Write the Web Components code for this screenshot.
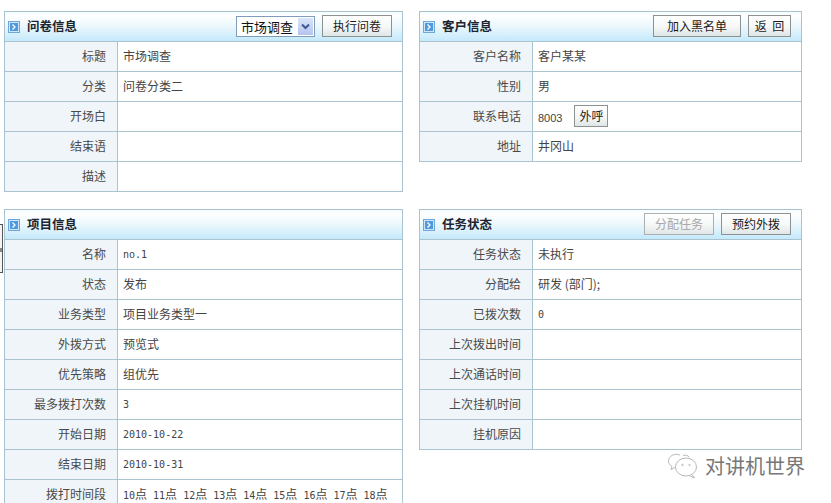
<!DOCTYPE html>
<html lang="zh">
<head>
<meta charset="utf-8">
<title>任务详情</title>
<style>
  html, body { margin: 0; padding: 0; height: 503px; overflow: hidden; background: #fff; }
  body { font: 12px "Noto Sans CJK SC", sans-serif; color: #444; }
  .mono { font: 10px "DejaVu Sans Mono", monospace; position: relative; top: 1px; }
  .slots .mono { top: 0; }
  .arial { font: 11px "Liberation Sans", sans-serif; padding-top: 5px; }
  .slots { display: flex; gap: 6px; }
</style>
</head>
<body>
<task-page>
  <info-panel title="问卷信息">
    <fake-select slot="actions">市场调查</fake-select>
    <panel-btn slot="actions" w="70">执行问卷</panel-btn>
    <info-row label="标题">市场调查</info-row>
    <info-row label="分类">问卷分类二</info-row>
    <info-row label="开场白"></info-row>
    <info-row label="结束语"></info-row>
    <info-row label="描述"></info-row>
  </info-panel>
  <info-panel title="客户信息">
    <panel-btn slot="actions" w="88">加入黑名单</panel-btn>
    <panel-btn slot="actions" w="43">返 回</panel-btn>
    <info-row label="客户名称">客户某某</info-row>
    <info-row label="性别">男</info-row>
    <info-row label="联系电话"><span class="arial">8003</span><panel-btn small w="34">外呼</panel-btn></info-row>
    <info-row label="地址">井冈山</info-row>
  </info-panel>
  <info-panel title="项目信息">
    <info-row label="名称"><span class="mono">no.1</span></info-row>
    <info-row label="状态">发布</info-row>
    <info-row label="业务类型">项目业务类型一</info-row>
    <info-row label="外拨方式">预览式</info-row>
    <info-row label="优先策略">组优先</info-row>
    <info-row label="最多拨打次数"><span class="mono">3</span></info-row>
    <info-row label="开始日期"><span class="mono">2010-10-22</span></info-row>
    <info-row label="结束日期"><span class="mono">2010-10-31</span></info-row>
    <info-row label="拨打时间段"><span class="slots">
      <span><span class="mono">10</span>点</span>
      <span><span class="mono">11</span>点</span>
      <span><span class="mono">12</span>点</span>
      <span><span class="mono">13</span>点</span>
      <span><span class="mono">14</span>点</span>
      <span><span class="mono">15</span>点</span>
      <span><span class="mono">16</span>点</span>
      <span><span class="mono">17</span>点</span>
      <span><span class="mono">18</span>点</span>
    </span></info-row>
  </info-panel>
  <info-panel title="任务状态">
    <panel-btn slot="actions" w="70" disabled>分配任务</panel-btn>
    <panel-btn slot="actions" w="70">预约外拨</panel-btn>
    <info-row label="任务状态">未执行</info-row>
    <info-row label="分配给">研发 (部门);</info-row>
    <info-row label="已拨次数"><span class="mono">0</span></info-row>
    <info-row label="上次拨出时间"></info-row>
    <info-row label="上次通话时间"></info-row>
    <info-row label="上次挂机时间"></info-row>
    <info-row label="挂机原因"></info-row>
  </info-panel>
</task-page>
<script>
class TaskPage extends HTMLElement {
  constructor() {
    super()
    this.attachShadow({ mode: "open" })
    this.shadowRoot.innerHTML = `
      <style>
        :host { display: block; position: relative; width: 831px; height: 503px; overflow: hidden; box-sizing: border-box; padding: 11px 0 0 4px; }
        .cols { display: grid; grid-template-columns: 399px 383px; grid-template-rows: 181px auto; gap: 17px 16px; align-items: start; }
        .handle { position: absolute; left: 0; top: 224px; width: 3px; height: 49px; box-sizing: border-box; border: 1px solid #555; border-left: 0; background: #f4f4f4; }
        .handle i { position: absolute; left: 0; top: 23px; width: 2px; height: 4px; background: #888; }
        .mark { position: absolute; left: 667px; top: 452px; display: flex; align-items: center; gap: 7px; font: 20px/28px "Noto Sans CJK SC", sans-serif; color: #777; }
        .mark svg { display: block; }
      </style>
      <div class="cols"><slot></slot></div>
      <div class="handle"><i></i></div>
      <div class="mark">
        <svg width="31" height="28" viewBox="0 0 31 28" fill="none" stroke="#b9b9b9" stroke-width="1">
          <path d="M13 3C7 1 2 4 1.500 8.500C1 11 3 13.500 5 14.500L4 17.500L8 15.500"/>
          <path d="M16 3.500C19 2.500 21 3.500 22 5"/>
          <ellipse cx="19" cy="15" rx="10.500" ry="9"/>
          <path d="M25 22.500L27.500 26L22.500 23.800"/>
          <circle cx="15.500" cy="13" r=".7"/>
          <circle cx="22.500" cy="13" r=".7"/>
        </svg>
        <span>对讲机世界</span>
      </div>
    `
  }
}

class InfoPanel extends HTMLElement {
  constructor() {
    super()
    this.attachShadow({ mode: "open" })
  }
  connectedCallback() {
    this.shadowRoot.innerHTML = `
      <style>
        :host { display: block; box-sizing: border-box; border: 1px solid #a9c3cf; border-bottom-width: 0; }
        header { box-sizing: border-box; height: 29px; display: flex; align-items: center; padding: 0 10px 2px 3px; background: linear-gradient(#f5fbfe, #ffffff 12%, #e8f6fd 55%, #c4e9fb); }
        h2 { margin: 0 0 0 7px; font: bold 12.500px "Noto Sans CJK SC", sans-serif; color: #1c2530; }
        .actions { margin-left: auto; display: flex; align-items: center; gap: 7px; }
        svg { display: block; flex: none; position: relative; top: 1px; }
      </style>
      <header>
        <svg width="12" height="12" viewBox="0 0 12 12">
          <rect x=".5" y=".5" width="11" height="11" fill="#cfe6f8" stroke="#6fa8d8"/>
          <rect x="2" y="2" width="8" height="8" fill="#4f9ade"/>
          <path d="M4.500 3.500L7 6L4.500 8.500" fill="none" stroke="#fff" stroke-width="1.300"/>
        </svg>
        <h2>${this.getAttribute("title")}</h2>
        <div class="actions"><slot name="actions"></slot></div>
      </header>
      <slot></slot>
    `
  }
}

class InfoRow extends HTMLElement {
  constructor() {
    super()
    this.attachShadow({ mode: "open" })
  }
  connectedCallback() {
    this.shadowRoot.innerHTML = `
      <style>
        :host { display: grid; grid-template-columns: 113px 1fr; height: 30px; box-sizing: border-box; border-top: 1px solid #a9c3cf; }
        :host(:last-child) { height: 31px; border-bottom: 1px solid #a9c3cf; }
        .label { display: flex; align-items: center; justify-content: flex-end; padding: 0 11px 2px 0; background: #eff5f9; border-right: 1px solid #a9c3cf; color: #4a4a4a; }
        .value { display: flex; align-items: center; gap: 12px; padding: 0 0 2px 5px; color: #444; white-space: nowrap; overflow: hidden; }
      </style>
      <div class="label">${this.getAttribute("label")}</div>
      <div class="value"><slot></slot></div>
    `
  }
}

class PanelBtn extends HTMLElement {
  constructor() {
    super()
    this.attachShadow({ mode: "open" })
  }
  connectedCallback() {
    const off = this.hasAttribute("disabled")
    this.shadowRoot.innerHTML = `
      <style>
        :host { display: block; box-sizing: border-box; width: ${this.getAttribute("w")}px; height: 22px; margin-top: 1px; }
        div { box-sizing: border-box; height: 100%; display: flex; align-items: center; justify-content: center; padding-bottom: 1px; border: 1px solid ${off ? "#aab0b0" : "#8a9292"}; background: linear-gradient(#ffffff, #f6f7f7 55%, #dfe6e6); color: ${off ? "#a8a8a8" : "#1a1a1a"}; font: 12px "Noto Sans CJK SC", sans-serif; white-space: pre; word-spacing: 3px; }
      </style>
      <div><slot></slot></div>
    `
  }
}

class FakeSelect extends HTMLElement {
  constructor() {
    super()
    this.attachShadow({ mode: "open" })
    this.shadowRoot.innerHTML = `
      <style>
        :host { display: flex; box-sizing: border-box; width: 79px; height: 21px; margin-top: 1px; align-items: center; border: 1px solid #7f9db9; background: #fff; color: #111; font: 13px "Noto Sans CJK SC", sans-serif; padding-left: 4px; }
        .arrow { margin-left: auto; margin-right: 1px; width: 15px; height: 17px; background: linear-gradient(#dbe4fa, #b4c4ee); display: flex; align-items: center; justify-content: center; }
      </style>
      <slot></slot>
      <span class="arrow">
        <svg width="9" height="7" viewBox="0 0 9 7"><path d="M1 1.500L4.500 5L8 1.500" fill="none" stroke="#3d5a94" stroke-width="2"/></svg>
      </span>
    `
  }
}

customElements.define("task-page", TaskPage)
customElements.define("info-panel", InfoPanel)
customElements.define("info-row", InfoRow)
customElements.define("panel-btn", PanelBtn)
customElements.define("fake-select", FakeSelect)
</script>
</body>
</html>
